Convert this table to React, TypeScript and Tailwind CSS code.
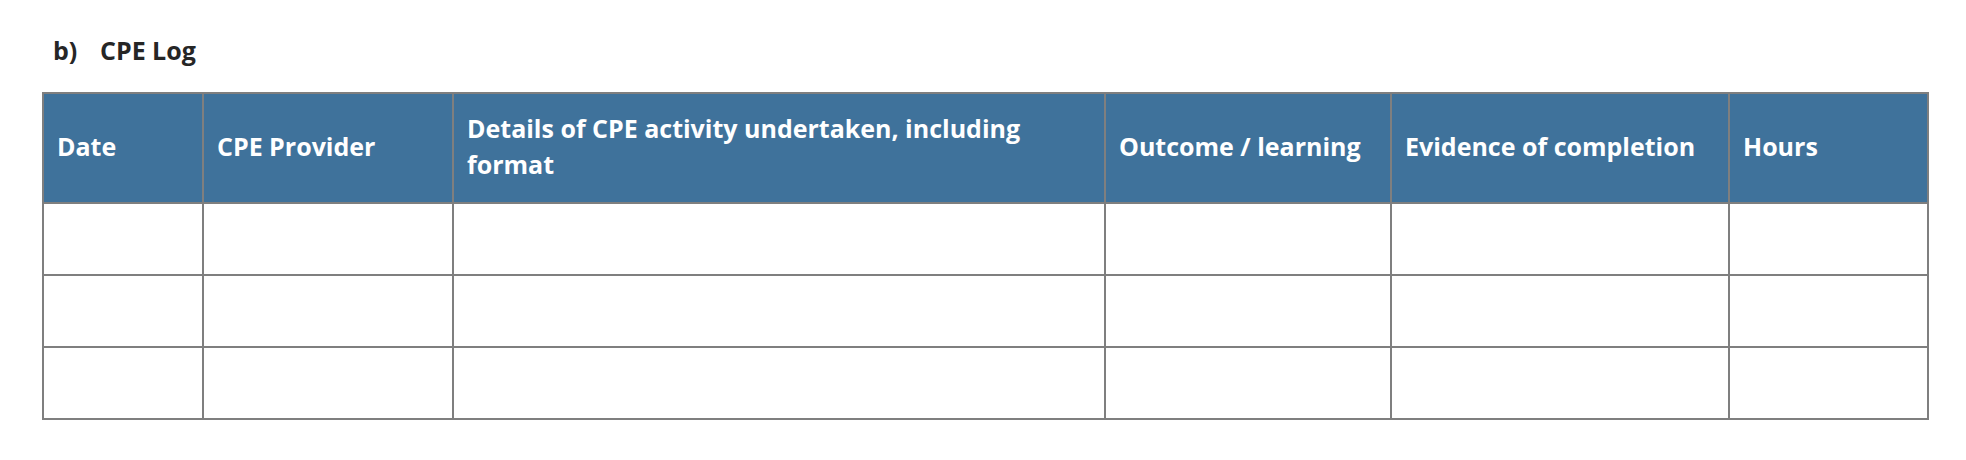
import React from 'react'

const columns = [
    'Date',
    'CPE Provider',
    'Details of CPE activity undertaken, including format',
    'Outcome / learning',
    'Evidence of completion',
    'Hours',
]

const rows = [0, 1, 2]

export default function App() {
    return (
        <div className="min-h-[460px] bg-white pl-[42px] pt-[35px] font-['Open_Sans',sans-serif]">
            <div className="flex h-[30px] items-center text-[25px] font-bold leading-[30px] text-[#262626]">
                <span className="w-[58px] pl-[11px]">b)</span>
                <span>CPE Log</span>
            </div>
            <div className="mt-[27px] grid w-[1887px] grid-cols-[158px_248px_650px_284px_336px_197px] gap-[2px] bg-[#7f7f7f] p-[2px]">
                {columns.map(col => (
                    <div
                        key={col}
                        className="flex h-[108px] items-center bg-[#3f729b] px-[13px] pb-[4px] text-[25px] font-bold leading-[36px] text-white"
                    >
                        {col}
                    </div>
                ))}
                {rows.map(r =>
                    columns.map(col => <div key={r + col} className="h-[70px] bg-white" />)
                )}
            </div>
        </div>
    )
}
